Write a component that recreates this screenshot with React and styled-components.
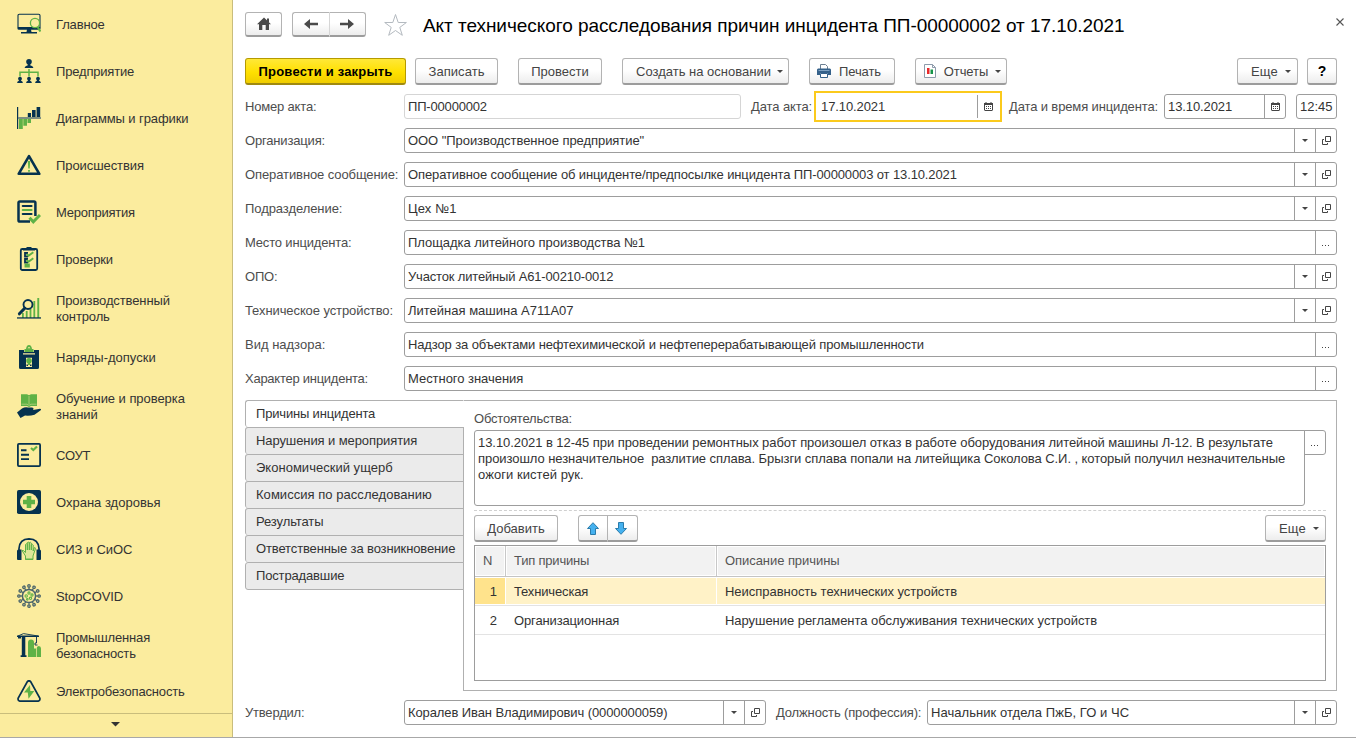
import React from "react";
import styled, { createGlobalStyle } from "styled-components";

const NAVY = "#06324f";
const GREEN = "#5fb246";

const GlobalStyle = createGlobalStyle`
  * {
    box-sizing: border-box;
  }

  body {
    margin: 0;
    background: #fff;
    font-family: "Liberation Sans", Arial, sans-serif;
    font-size: 13px;
    color: #333;
  }

  svg {
    display: block;
    flex: none;
  }
`;

const Page = styled.div`
  display: flex;
  width: 1356px;
  height: 738px;
  overflow: hidden;
  border-bottom: 1px solid #a8a8a8;
`;

const Sidebar = styled.aside`
  display: flex;
  flex-direction: column;
  flex: none;
  width: 233px;
  background: #fbec9e;
  border-right: 1px solid #c9bd7c;
`;

const Menu = styled.nav`
  flex: 1;
  padding-top: 0.5px;
  overflow: hidden;
`;

const MenuItem = styled.div`
  display: flex;
  align-items: center;
  height: ${(props) => (props.$tall ? "51px" : "47px")};
  margin-top: ${(props) => props.$mt || "0"};
  padding-left: 17px;
  gap: 15px;
  line-height: 16px;
  white-space: pre-line;
  letter-spacing: ${(props) => props.$ls || 0}px;
`;

const MenuText = styled.span`
  padding-top: 1px;
`;

const MenuMore = styled.div`
  display: flex;
  align-items: center;
  justify-content: center;
  height: 24px;
  padding: 0 2px 2px 0;
  border-top: 1px solid #c9bd7c;
`;

const Main = styled.main`
  display: flex;
  flex-direction: column;
  flex: 1;
  padding: 12px 19px 0 12px;
`;

const TitleBar = styled.header`
  display: flex;
  height: 26px;
`;

const Title = styled.h1`
  flex: 1;
  margin: 0 0 0 15px;
  font-size: 19px;
  font-weight: normal;
  line-height: 27px;
  white-space: nowrap;
  color: #000;
  letter-spacing: -0.055px;
`;

const Close = styled.div`
  margin: 6px -7px 0 0;
`;

const Toolbar = styled.div`
  display: flex;
  height: 27px;
  margin-top: ${(props) => props.$mt || "0"};
`;

const Button = styled.button`
  display: flex;
  align-items: center;
  justify-content: center;
  flex: none;
  width: ${(props) => props.$w}px;
  height: ${(props) => props.$h || 27}px;
  margin: 0 0 0 ${(props) => props.$ml || 0};
  padding: 0 ${(props) => props.$pr || 0}px 0 ${(props) => props.$pl || 0}px;
  gap: ${(props) => props.$gap || 6}px;
  border: 1px solid ${(props) => (props.$primary ? "#b59a00" : "#b3b3b3")};
  border-bottom: 2px solid ${(props) => (props.$primary ? "#a08a10" : "#9c9c9c")};
  border-radius: 3px;
  background: ${(props) =>
    props.$primary
      ? "linear-gradient(#ffe838, #ffe000 55%, #f0cd00)"
      : "linear-gradient(#fff 45%, #ededed)"};
  font-family: inherit;
  font-size: ${(props) => (props.$bold ? "14px" : "13px")};
  font-weight: ${(props) => (props.$primary || props.$bold ? "bold" : "normal")};
  color: ${(props) => (props.$primary || props.$bold ? "#000" : "#444")};
  letter-spacing: ${(props) => props.$ls || 0}px;
  white-space: nowrap;
`;

const ButtonPair = styled.div`
  display: flex;
  margin-left: ${(props) => props.$ml};

  ${Button}:first-child {
    border-right-color: ${(props) => props.$divider || "#b3b3b3"};
    border-top-right-radius: 0;
    border-bottom-right-radius: 0;
  }

  ${Button}:last-child {
    border-left: 0;
    border-top-left-radius: 0;
    border-bottom-left-radius: 0;
  }
`;

const Star = styled.div`
  margin: 1px 0 0 18px;
`;

const Form = styled.section`
  display: flex;
  flex-direction: column;
  margin-top: 9px;
  gap: 9px;
`;

const FormRow = styled.div`
  display: flex;
  align-items: center;
  height: 25px;
  margin-top: ${(props) => props.$mt || "0"};
`;

const Label = styled.label`
  flex: none;
  width: ${(props) => props.$w || 159}px;
  margin-left: ${(props) => props.$ml || 0}px;
  color: #4d4d4d;
  white-space: nowrap;
  letter-spacing: ${(props) => props.$ls || 0}px;
`;

const Field = styled.div`
  display: flex;
  flex: ${(props) => (props.$w ? "none" : "1")};
  width: ${(props) => (props.$w ? `${props.$w}px` : "auto")};
  height: 25px;
  margin-left: ${(props) => props.$ml || 0}px;
  border: 1px solid ${(props) => (props.$readonly ? "#d5d5d5" : "#9d9d9d")};
  border-radius: 3px;
  background: #fff;
`;

const FocusField = styled(Field)`
  height: 31px;
  padding: 2px;
  border: 2px solid #fbca1c;
  border-radius: 0;
`;

const Value = styled.span`
  flex: 1;
  align-self: center;
  padding-left: 3px;
  white-space: nowrap;
  letter-spacing: ${(props) => props.$ls || 0}px;
`;

const FieldButton = styled.span`
  display: flex;
  align-items: center;
  justify-content: center;
  width: 21px;
  border-left: 1px solid #9d9d9d;
`;

const Details = styled.section`
  display: flex;
  height: 291px;
  margin-top: 9px;
`;

const Tabs = styled.div`
  z-index: 1;
  width: 219px;
  margin-right: -1px;
`;

const Tab = styled.div`
  height: ${(props) => (props.$last ? "28px" : "27px")};
  padding-left: 10px;
  border: 1px solid #b0b0b0;
  border-bottom-width: ${(props) => (props.$last ? "1px" : "0")};
  border-right-color: ${(props) => (props.$active ? "#fff" : "#b0b0b0")};
  border-radius: 3px 0 0 3px;
  background: ${(props) => (props.$active ? "#fff" : "#ebebeb")};
  line-height: 25px;
  white-space: nowrap;
  letter-spacing: ${(props) => props.$ls || 0}px;
`;

const TabPanel = styled.div`
  display: flex;
  flex-direction: column;
  flex: 1;
  padding: 10px 10px 9px;
  border: 1px solid #b0b0b0;
`;

const Notes = styled.div`
  display: flex;
  height: 81px;
  margin-top: 4px;
  border-bottom: 1px dashed #d0d0d0;
`;

const NotesText = styled.div`
  width: 831px;
  height: 76px;
  padding: 4px 3px;
  border: 1px solid #9d9d9d;
  border-radius: 3px 0 3px 3px;
  line-height: 16px;
  white-space: pre;
`;

const NotesLine = styled.div`
  letter-spacing: ${(props) => props.$ls || 0}px;
`;

const NotesButton = styled.div`
  display: flex;
  align-items: center;
  justify-content: center;
  width: 22px;
  height: 25px;
  margin-left: -1px;
  border: 1px solid #9d9d9d;
  border-radius: 0 3px 3px 0;
`;

const Table = styled.div`
  height: 136px;
  margin-top: 3px;
  border: 1px solid #9d9d9d;
`;

const TableRow = styled.div`
  display: grid;
  grid-template-columns: 30px 210px 1fr;
  gap: 1px;
  height: ${(props) => (props.$head ? 31 : 29)}px;
  padding: ${(props) => (props.$head ? "0" : "1px 0")};
  border-bottom: 1px solid ${(props) => (props.$head ? "#c4c4c4" : "#e3e3e3")};
  background: ${(props) => (props.$head ? "#c8c8c8" : "#fff")};
`;

const Cell = styled.div`
  display: flex;
  align-items: center;
  justify-content: ${(props) => (props.$right ? "flex-end" : "flex-start")};
  padding: ${(props) => (props.$right ? "0 8px 0 0" : "0 8px")};
  background: ${(props) => props.$bg || "transparent"};
  color: #333;
  white-space: nowrap;
  letter-spacing: ${(props) => props.$ls || 0}px;
`;

const HeadCell = styled(Cell)`
  border: 1px solid #fff;
  padding: 0 7px 2px;
  background: #f2f2f2;
  color: #555;
`;

const Spacer = styled.div`
  flex: 1;
`;

const Caret = ({ size = 6, color = "#444" }) => (
  <svg width={size} height={size / 2} viewBox="0 0 6 3">
    <path d="M0 0H6L3 3Z" fill={color} />
  </svg>
);

const OpenIcon = () => (
  <svg width="9" height="9" viewBox="0 0 9 9" fill="none" stroke="#444">
    <path d="M3.5 .5H8.5V5.5H3.5Z" />
    <path d="M2 3.5H.5V8.5H5.5V7" />
  </svg>
);

const Dots = () => (
  <svg width="9" height="9" viewBox="0 0 9 9" fill="#444">
    <path d="M0 7h1v1H0zM3 7h1v1H3zM6 7h1v1H6z" />
  </svg>
);

const CalendarIcon = () => (
  <svg width="9" height="9" viewBox="0 0 9 9">
    <path d="M0 1H1.5V0H2.5V1H6.5V0H7.5V1H9V8L8 9H1L0 8Z" fill="#444" />
    <path d="M1 3H8V8H1Z" fill="#fff" />
    <path d="M2 4h1v1H2zM4 4h1v1H4zM6 4h1v1H6zM2 6h1v1H2zM4 6h1v1H4zM6 6h1v1H6z" fill="#444" />
  </svg>
);

const HomeIcon = () => (
  <svg width="16" height="14" viewBox="0 0 16 14">
    <path d="M8 0.5L15 7.2H13V13H9.7V8H6.3V13H3V7.2H1Z" fill="#4a4a4a" />
    <path d="M11 1.5H13V5H11Z" fill="#4a4a4a" />
  </svg>
);

const ArrowIcon = ({ right }) => (
  <svg width="16" height="12" viewBox="0 0 16 12">
    <path
      d={right ? "M1 4.7H9V1L15 6L9 11V7.3H1Z" : "M15 4.7H7V1L1 6L7 11V7.3H15Z"}
      fill="#4a4a4a"
    />
  </svg>
);

const StarIcon = () => (
  <svg width="24" height="24" viewBox="0 0 24 24" fill="none" stroke="#b4bac0">
    <path d="M11.5 1.5L14.2 9.5H22.4L15.8 14.4L18.3 22.3L11.5 17.5L4.7 22.3L7.2 14.4L0.7 9.5H8.8Z" />
  </svg>
);

const CloseIcon = () => (
  <svg width="8" height="8" viewBox="0 0 8 8" stroke="#555" strokeWidth="1.1">
    <path d="M.5 .5L7.5 7.5M7.5 .5L.5 7.5" />
  </svg>
);

const PrinterIcon = () => (
  <svg width="14" height="14" viewBox="0 0 14 14">
    <path d="M3.5 5V0.5H8.5L10.5 2.5V5" fill="#fff" stroke="#6c7f92" />
    <path d="M0 5.5L1 4.5H13L14 5.5V11H11V9H3V11H0Z" fill="#35618a" />
    <path d="M1.5 6H12.5V7H1.5Z" fill="#7fa3c4" />
    <path d="M3.5 9.5H10.5V13.5H3.5Z" fill="#fff" stroke="#35618a" />
  </svg>
);

const ReportIcon = () => (
  <svg width="14" height="14" viewBox="0 0 14 14">
    <path d="M1.5 .5H9.5L12.5 3.5V13.5H1.5Z" fill="#fff" stroke="#8d9bab" />
    <path d="M9.5 .5V3.5H12.5" fill="none" stroke="#8d9bab" />
    <path d="M4 4H6.5V10H4Z" fill="#e8292b" />
    <path d="M7.5 5.5H10V10H7.5Z" fill="#159447" />
  </svg>
);

const MoveIcon = ({ down }) => (
  <svg width="12" height="13" viewBox="0 0 12 13">
    <path
      d={down ? "M3.5 .5H8.5V6.5H11.5L6 12.3L.5 6.5H3.5Z" : "M6 .7L11.5 6.5H8.5V12.5H3.5V6.5H.5Z"}
      fill="#45b1ef"
      stroke="#2b7cab"
    />
  </svg>
);

const icons = {
  home: (
    <>
      <path d="M1 15V3.5Q1 2.3 2.3 2.3H21.7Q23 2.3 23 3.5V15" fill="none" stroke={NAVY} strokeWidth="1.1" />
      <path d="M.4 15H23.6V16.2Q23.6 17.8 22 17.8H2Q.4 17.8 .4 16.2ZM10 17.5H14L14.5 20H20V21.6H4V20H9.5Z" fill={NAVY} />
      <circle cx="18" cy="11" r="4.6" fill="#fbec9e" stroke={GREEN} strokeWidth="1.3" />
      <path d="M20.6 15L23.4 19.5" stroke={GREEN} strokeWidth="2.2" />
    </>
  ),
  company: (
    <>
      <path d="M12 10V14M3 17.5V13.3H21V17.5M12 13V17.5" fill="none" stroke={GREEN} strokeWidth="1.5" />
      <circle cx="12" cy="2.8" r="2.8" fill={NAVY} />
      <path d="M10.8 4H13.2V6.2Q16 6.8 16.5 9H7.5Q8 6.8 10.8 6.2Z" fill={NAVY} />
      {[3, 12, 21].map((x) => (
        <g key={x} fill={NAVY}>
          <circle cx={x} cy="19.7" r="1.9" />
          <path d={`M${x - 1} 20H${x + 1}V21.8Q${x + 2.8} 22.1 ${x + 2.9} 24H${x - 2.9}Q${x - 2.8} 22.1 ${x - 1} 21.8Z`} />
        </g>
      ))}
    </>
  ),
  charts: (
    <>
      <path d="M0 1H1.2V23H0ZM10.8 7H14V11H10.8ZM15 4H18.6V11H15ZM19.6 1H23.2V11H19.6Z" fill={NAVY} />
      <path d="M2 13H5.8V23H2ZM6.3 13H10V19.7H6.3ZM10.5 13H14V17H10.5Z" fill={GREEN} />
      <path d="M1 11H24V13H1Z" fill="#7f8f80" />
    </>
  ),
  incidents: (
    <>
      <path d="M12 3.2L22.3 20.8H1.7Z" fill="none" stroke={NAVY} strokeWidth="2.6" strokeLinejoin="round" />
      <path d="M10.8 8H13.2L12.7 15.5H11.3ZM11.1 17H12.9V18.8H11.1Z" fill={GREEN} />
    </>
  ),
  actions: (
    <>
      <path d="M13 21.6H2.9Q1.5 21.6 1.5 20.2V2.8Q1.5 1.4 2.9 1.4H17Q18.4 1.4 18.4 2.8V16" fill="none" stroke={NAVY} strokeWidth="2.5" />
      <path d="M5.8 6H14.5M5.8 14H14.5" stroke={NAVY} strokeWidth="2.2" strokeLinecap="round" />
      <path d="M5.8 10H14.5" stroke={GREEN} strokeWidth="2.2" strokeLinecap="round" />
      <path d="M12.5 17.7L16.3 21.8L23 15" fill="none" stroke={GREEN} strokeWidth="3" />
    </>
  ),
  checks: (
    <>
      <rect x="3.8" y="2" width="16.4" height="21" rx="1.5" fill="none" stroke={NAVY} strokeWidth="1.8" />
      <path d="M6 1.3H9.5V0H14.5V1.3H18V3.6H6Z" fill={NAVY} />
      <path d="M11 6H8V9.5H11M11 12H8V15.5H11" fill="none" stroke={NAVY} strokeWidth="1.8" />
      <path d="M9.5 7L11.5 8.7L16.3 5.2M9.5 13L11.5 14.7L16.3 11.2" fill="none" stroke={GREEN} strokeWidth="2" />
      <path d="M7.5 16.5H12.8V20.5H7.5Z" fill={GREEN} />
    </>
  ),
  control: (
    <>
      <path d="M5 17H6.8V22H5ZM8.8 15H10.6V22H8.8ZM12.6 13H14.4V22H12.6ZM16.4 5H18.2V22H16.4ZM20.3 2H22.2V22H20.3Z" fill={GREEN} />
      <path d="M0 21.3H24V22.6H0Z" fill={NAVY} />
      <circle cx="11" cy="8.5" r="4.5" fill="#fbec9e" stroke={NAVY} strokeWidth="1.9" />
      <path d="M7.7 12.2L2.4 17.8" stroke={NAVY} strokeWidth="3" strokeLinecap="round" />
    </>
  ),
  permits: (
    <>
      <path d="M2 5H7V7H17V5H22V22.5Q22 24 20.5 24H3.5Q2 24 2 22.5Z" fill={NAVY} />
      <path d="M7.5 7V4H9Q9.5 0 12 0Q14.5 0 15 4H16.5V7Z" fill={GREEN} />
      <path d="M10.7 3.2Q12 1 13.3 3.2Z" fill="#fbec9e" />
      <path d="M6 8.3H18V9.6H6ZM9 12.8H15V22H9Z" fill="#fbec9e" />
      <circle cx="12" cy="15.8" r="2.8" fill={GREEN} />
      <path d="M11 18H13V20H11Z" fill={GREEN} />
      <path d="M9.5 19.6H11V21H9.5ZM13 19.6H14.5V21H13Z" fill={NAVY} />
    </>
  ),
  training: (
    <>
      <path d="M4 .3H10L12 1.3L14 .3H20V12H14L12 13L10 12H4Z" fill={GREEN} />
      <path d="M12 2V10M4.5 10.2H10L12 11.3L14 10.2H19.5" fill="none" stroke="#b9d27d" strokeWidth=".8" />
      <path d="M0 18.5L5 14.5Q8 12.7 11 13.5H15Q17.5 14 16 16L23 14.8Q24.6 15 23.7 16.3L17.5 20.7Q13 22 8 21.5L3.5 24Z" fill={NAVY} />
    </>
  ),
  sout: (
    <>
      <rect x=".9" y=".9" width="22.2" height="22.2" rx="1" fill="none" stroke={NAVY} strokeWidth="1.8" />
      <path d="M4 7.3H9.5M4 11.7H12M4 16.1H12" stroke={NAVY} strokeWidth="1.9" />
      <path d="M14 5L16.3 7L20 3.4" fill="none" stroke={GREEN} strokeWidth="2.1" />
    </>
  ),
  health: (
    <>
      <rect width="24" height="24" rx="1.8" fill={NAVY} />
      <circle cx="12" cy="12" r="9" fill="#fbec9e" />
      <path d="M9.7 6H14.3V9.7H18V14.3H14.3V18H9.7V14.3H6V9.7H9.7Z" fill={GREEN} />
    </>
  ),
  ppe: (
    <>
      <path d="M2 14V11.5Q2.5 2 12 1.8Q21.5 2 22 11.5V14" fill="none" stroke={NAVY} strokeWidth="1.7" />
      <path d="M0 14Q0 12.5 1.5 12.5H4.5V23H1Q0 23 0 22ZM24 14Q24 12.5 22.5 12.5H19.5V23H23Q24 23 24 22Z" fill={NAVY} />
      <path d="M8.5 22.5V19L5 13.5Q6 12.5 8.5 15.5V7.5Q9.5 6 10.3 7.5V13V5.7Q11.2 4.5 12.3 5.7V13V5.7Q13.5 4.7 14.3 6V13V8Q15.5 6.7 16.2 8V14L17 11Q18.4 10 18.5 11.5L16 19V22.5Z" fill="#dfe698" stroke={GREEN} strokeWidth="1" />
      <path d="M8.5 21.5H16V23H8.5Z" fill={GREEN} />
    </>
  ),
  covid: (
    <>
      <circle cx="12" cy="12" r="6.6" fill="none" stroke="#49646a" strokeWidth="1.5" />
      {[0, 30, 60, 90, 120, 150, 180, 210, 240, 270, 300, 330].map((a) => (
        <g key={a} transform={`rotate(${a} 12 12)`} fill="none" stroke="#49646a">
          <path d="M12 5.4V3.2" strokeWidth="1.2" />
          <circle cx="12" cy="1.9" r="1.2" strokeWidth="1.3" />
        </g>
      ))}
      <g fill="none" stroke={GREEN} strokeWidth="1.1">
        <circle cx="12" cy="9" r="1.1" />
        <circle cx="15" cy="11" r="1.1" />
        <circle cx="9.2" cy="12" r="1.2" />
        <circle cx="13.5" cy="14.3" r="1.2" />
        <circle cx="10.3" cy="15.3" r=".8" />
      </g>
    </>
  ),
  industry: (
    <>
      <path d="M11 24V9.5Q11 6.5 14 6.5Q17 6.5 17 9.5V15.5H19V24ZM19.7 24V15.5Q19.7 13 21.8 13Q24 13 24 15.5V24Z" fill={GREEN} />
      <path d="M4.8 3H8.3V22.3H9.5V24H3.6V22.3H4.8ZM0 2.5H22V4H0Z" fill={NAVY} />
      <path d="M1 3L6.5 .6L21 3M19.5 4V10H18V12H20.5" fill="none" stroke={NAVY} strokeWidth=".9" />
      <path d="M1 3.5H4V5.5H1Z" fill={NAVY} />
    </>
  ),
  electric: (
    <>
      <path d="M10.4 1.6Q12 0 13.6 1.6L22.9 18.4Q23.3 20.7 21.2 21.2H2.8Q.7 20.7 1.1 18.4Z" fill="none" stroke={NAVY} strokeWidth="1.7" />
      <path d="M13 5L7 12.5H10.8L11.5 18.7L17.3 11H13.3Z" fill={GREEN} />
    </>
  ),
};

const menu = [
  { icon: "home", text: "Главное", ls: -0.15 },
  { icon: "company", text: "Предприятие", ls: -0.18 },
  { icon: "charts", text: "Диаграммы и графики", ls: -0.1 },
  { icon: "incidents", text: "Происшествия", ls: -0.08 },
  { icon: "actions", text: "Мероприятия", ls: -0.25 },
  { icon: "checks", text: "Проверки", ls: -0.12 },
  { icon: "control", text: "Производственный\nконтроль", tall: true, ls: -0.12 },
  { icon: "permits", text: "Наряды-допуски" },
  { icon: "training", text: "Обучение и проверка\nзнаний", tall: true, ls: -0.05 },
  { icon: "sout", text: "СОУТ", ls: -0.2 },
  { icon: "health", text: "Охрана здоровья" },
  { icon: "ppe", text: "СИЗ и СиОС", ls: -0.1 },
  { icon: "covid", text: "StopCOVID", ls: -0.1 },
  { icon: "industry", text: "Промышленная\nбезопасность", tall: true, ls: -0.16 },
  { icon: "electric", text: "Электробезопасность", mt: "-2.5px", ls: -0.16 },
];

const fields = [
  { label: "Организация:", labelLs: -0.17, value: 'ООО "Производственное предприятие"', ls: -0.06, select: true },
  {
    label: "Оперативное сообщение:",
    labelLs: -0.1,
    value: "Оперативное сообщение об инциденте/предпосылке инцидента ПП-00000003 от 13.10.2021",
    ls: -0.12,
    select: true,
  },
  { label: "Подразделение:", labelLs: -0.07, value: "Цех №1", ls: 0.15, select: true },
  { label: "Место инцидента:", labelLs: -0.17, value: "Площадка литейного производства №1", ls: -0.05 },
  { label: "ОПО:", labelLs: -0.2, value: "Участок литейный А61-00210-0012", ls: -0.17, select: true },
  { label: "Техническое устройство:", labelLs: -0.09, value: "Литейная машина А711А07", select: true },
  {
    label: "Вид надзора:",
    value: "Надзор за объектами нефтехимической и нефтеперерабатывающей промышленности",
    ls: -0.125,
  },
  { label: "Характер инцидента:", labelLs: -0.26, value: "Местного значения", ls: -0.04 },
];

const tabs = [
  { text: "Причины инцидента", ls: -0.18 },
  { text: "Нарушения и мероприятия", ls: -0.09 },
  { text: "Экономический ущерб", ls: 0.02 },
  { text: "Комиссия по расследованию", ls: 0.04 },
  { text: "Результаты", ls: -0.1 },
  { text: "Ответственные за возникновение", ls: -0.13 },
  { text: "Пострадавшие", ls: -0.15 },
];

const notes = [
  {
    text: "13.10.2021 в 12-45 при проведении ремонтных работ произошел отказ в работе оборудования литейной машины Л-12. В результате",
    ls: -0.064,
  },
  {
    text: "произошло незначительное  разлитие сплава. Брызги сплава попали на литейщика Соколова С.И. , который получил незначительные",
    ls: -0.067,
  },
  { text: "ожоги кистей рук.", ls: 0.05 },
];

const causes = [
  { type: "Техническая", typeLs: -0.15, text: "Неисправность технических устройств", ls: -0.03, active: true },
  { type: "Организационная", typeLs: -0.14, text: "Нарушение регламента обслуживания технических устройств", ls: -0.04 },
];

const SelectButtons = () => (
  <>
    <FieldButton>
      <Caret />
    </FieldButton>
    <FieldButton>
      <OpenIcon />
    </FieldButton>
  </>
);

const App = () => {
  return (
    <Page>
      <GlobalStyle />
      <Sidebar>
        <Menu>
          {menu.map((item) => (
            <MenuItem key={item.icon} $tall={item.tall} $mt={item.mt} $ls={item.ls}>
              <svg width="24" height="24" viewBox="0 0 24 24">
                {icons[item.icon]}
              </svg>
              <MenuText>{item.text}</MenuText>
            </MenuItem>
          ))}
        </Menu>
        <MenuMore>
          <Caret size={9} color="#333" />
        </MenuMore>
      </Sidebar>

      <Main>
        <TitleBar>
          <Button $w={37} $h={25}>
            <HomeIcon />
          </Button>
          <ButtonPair $ml="10px" $divider="#d6d6d6">
            <Button $w={38} $h={25}>
              <ArrowIcon />
            </Button>
            <Button $w={36} $h={25} $pr={2}>
              <ArrowIcon right />
            </Button>
          </ButtonPair>
          <Star>
            <StarIcon />
          </Star>
          <Title>Акт технического расследования причин инцидента ПП-00000002 от 17.10.2021</Title>
          <Close>
            <CloseIcon />
          </Close>
        </TitleBar>

        <Toolbar $mt="20px">
          <Button $w={161} $primary $ls={0.2}>
            Провести и закрыть
          </Button>
          <Button $w={83} $ml="9px" $ls={0.05}>
            Записать
          </Button>
          <Button $w={84} $ml="20px">
            Провести
          </Button>
          <Button $w={167} $ml="20px" $pl={8}>
            Создать на основании <Caret />
          </Button>
          <Button $w={86} $ml="20px" $pr={6} $gap={8} $ls={-0.1}>
            <PrinterIcon /> Печать
          </Button>
          <Button $w={92} $ml="20px" $pl={2} $gap={7} $ls={-0.1}>
            <ReportIcon /> Отчеты <Caret />
          </Button>
          <Spacer />
          <Button $w={61} $pl={7} $gap={7} $ls={0.2}>
            Еще <Caret />
          </Button>
          <Button $w={30} $ml="9px" $bold>
            ?
          </Button>
        </Toolbar>

        <Form>
          <FormRow>
            <Label $ls={-0.18}>Номер акта:</Label>
            <Field $w={337} $readonly>
              <Value $ls={-0.18}>ПП-00000002</Value>
            </Field>
            <Label $w={63} $ml={10} $ls={-0.1}>
              Дата акта:
            </Label>
            <FocusField $w={188}>
              <Value $ls={-0.1}>17.10.2021</Value>
              <FieldButton>
                <CalendarIcon />
              </FieldButton>
            </FocusField>
            <Label $w={155} $ml={7} $ls={-0.13}>
              Дата и время инцидента:
            </Label>
            <Field $w={122}>
              <Value $ls={-0.1}>13.10.2021</Value>
              <FieldButton>
                <CalendarIcon />
              </FieldButton>
            </Field>
            <Field $ml={10}>
              <Value>12:45</Value>
            </Field>
          </FormRow>
          {fields.map((field) => (
            <FormRow key={field.label}>
              <Label $ls={field.labelLs}>{field.label}</Label>
              <Field>
                <Value $ls={field.ls}>{field.value}</Value>
                {field.select ? (
                  <SelectButtons />
                ) : (
                  <FieldButton>
                    <Dots />
                  </FieldButton>
                )}
              </Field>
            </FormRow>
          ))}
        </Form>

        <Details>
          <Tabs>
            {tabs.map((tab, i) => (
              <Tab key={tab.text} $active={i === 0} $last={i === tabs.length - 1} $ls={tab.ls}>
                {tab.text}
              </Tab>
            ))}
          </Tabs>
          <TabPanel>
            <Label $w={120} $ls={-0.2}>
              Обстоятельства:
            </Label>
            <Notes>
              <NotesText>
                {notes.map((line) => (
                  <NotesLine key={line.text} $ls={line.ls}>
                    {line.text}
                  </NotesLine>
                ))}
              </NotesText>
              <NotesButton>
                <Dots />
              </NotesButton>
            </Notes>
            <Toolbar $mt="4px">
              <Button $w={84}>Добавить</Button>
              <ButtonPair $ml="20px">
                <Button $w={30}>
                  <MoveIcon />
                </Button>
                <Button $w={30} $pr={3}>
                  <MoveIcon down />
                </Button>
              </ButtonPair>
              <Spacer />
              <Button $w={61} $pl={7} $gap={7} $ls={0.2}>
                Еще <Caret />
              </Button>
            </Toolbar>
            <Table>
              <TableRow $head>
                <HeadCell>N</HeadCell>
                <HeadCell $ls={-0.2}>Тип причины</HeadCell>
                <HeadCell $ls={-0.06}>Описание причины</HeadCell>
              </TableRow>
              {causes.map((cause, i) => (
                <TableRow key={cause.type}>
                  <Cell $bg={cause.active && "#ffe38c"} $right>
                    {i + 1}
                  </Cell>
                  <Cell $bg={cause.active && "#fff2c7"} $ls={cause.typeLs}>
                    {cause.type}
                  </Cell>
                  <Cell $bg={cause.active && "#fff2c7"} $ls={cause.ls}>
                    {cause.text}
                  </Cell>
                </TableRow>
              ))}
            </Table>
          </TabPanel>
        </Details>

        <FormRow $mt="9px">
          <Label $ls={-0.2}>Утвердил:</Label>
          <Field $w={362}>
            <Value $ls={-0.1}>Коралев Иван Владимирович (0000000059)</Value>
            <SelectButtons />
          </Field>
          <Label $w={151} $ml={10} $ls={-0.14}>
            Должность (профессия):
          </Label>
          <Field>
            <Value $ls={0.06}>Начальник отдела ПжБ, ГО и ЧС</Value>
            <SelectButtons />
          </Field>
        </FormRow>
      </Main>
    </Page>
  );
};

export default App;
